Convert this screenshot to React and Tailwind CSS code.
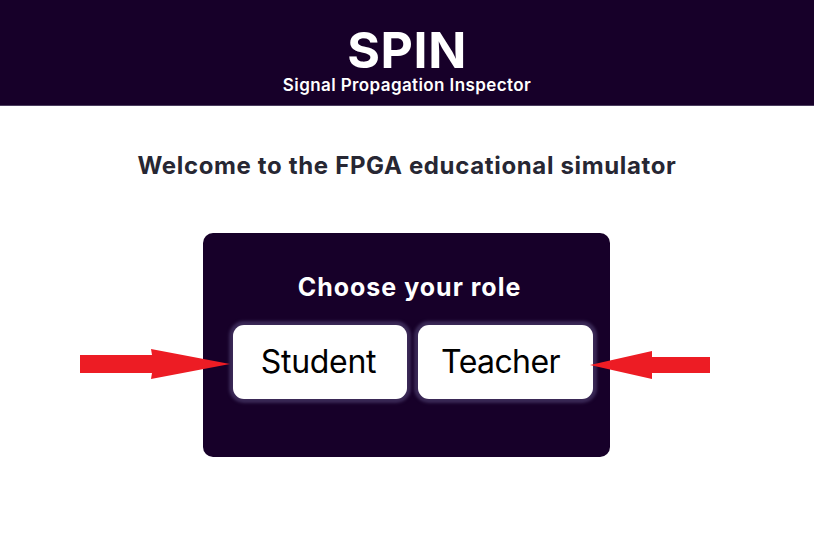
import React from "react";

function LeftArrow() {
  return (
    <svg className="absolute left-[78px] top-[348px]" width="154" height="32" viewBox="0 0 154 32">
      <path d="M2 7 L74 7 L73 1 L152 16 L73 31 L74 25 L2 25 Z" fill="#ed1c24" />
    </svg>
  );
}

function RightArrow() {
  return (
    <svg className="absolute left-[588px] top-[350px]" width="124" height="32" viewBox="0 0 124 32">
      <path d="M122 7 L64 7 L64 1 L2 15 L64 29 L64 23 L122 23 Z" fill="#ed1c24" />
    </svg>
  );
}

export default function App() {
  return (
    <div
      className="relative w-[814px] h-[537px] bg-white overflow-hidden"
      style={{ fontFamily: "Inter, 'Noto Sans', sans-serif" }}
    >
      <header className="h-[106px] bg-[#170029] border-b border-[#4b3d5e] flex flex-col items-center pt-[27px]">
        <h1 className="text-[50px] leading-[46px] font-bold text-white tracking-[0.6px]">SPIN</h1>
        <p className="mt-[2px] text-[17px] leading-[20px] font-semibold text-white tracking-[0.4px]">
          Signal Propagation Inspector
        </p>
      </header>

      <h2 className="mt-[44px] text-center text-[24px] leading-[32px] font-bold text-[#272733] tracking-[0.65px]">
        Welcome to the FPGA educational simulator
      </h2>

      <div className="mt-[51px] ml-[203px] w-[407px] h-[224px] rounded-[10px] bg-[#170029] pt-[38px] pl-[30px]">
        <div className="w-[353px] text-center text-[25px] leading-[32px] font-bold text-white tracking-[1px]">
          Choose your role
        </div>
        <div className="mt-[22px] flex gap-[11px]">
          <button className="w-[174px] h-[74px] rounded-[11px] bg-white pr-[3px] text-[32px] font-normal text-black shadow-[0_0_3px_4px_#3a2856] tracking-[-0.3px]">
            Student
          </button>
          <button className="w-[175px] h-[74px] rounded-[11px] bg-white pr-[10px] text-[32px] font-normal text-black shadow-[0_0_3px_4px_#3a2856] tracking-[-0.6px]">
            Teacher
          </button>
        </div>
      </div>

      <LeftArrow />
      <RightArrow />
    </div>
  );
}
